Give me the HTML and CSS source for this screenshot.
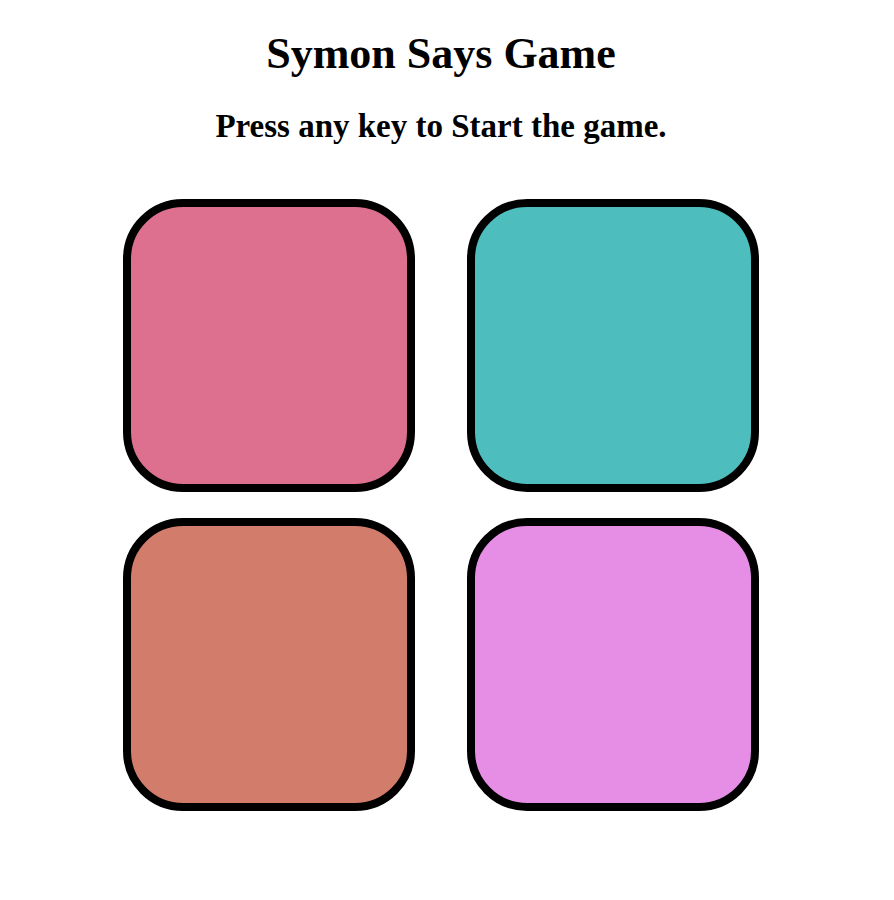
FILE: index.html
```html
<!DOCTYPE html>
<html>
<head>
<meta charset="utf-8">
<title>Symon Says Game</title>
<link rel="stylesheet" href="styles.css">
</head>
<body>
<div class="page">
  <h1 class="title">Symon Says Game</h1>
  <h2 class="subtitle">Press any key to Start the game.</h2>
  <div class="board">
    <div class="btn red"></div>
    <div class="btn teal"></div>
    <div class="btn brown"></div>
    <div class="btn pink"></div>
  </div>
</div>
</body>
</html>
```
FILE: styles.css
```css
body {
  margin: 0;
  font-family: "Liberation Serif", "Times New Roman", serif;
  background: #fff;
  color: #000;
}
.page {
  width: 882px;
  display: flex;
  flex-direction: column;
  align-items: center;
}
.title {
  font-size: 44px;
  font-weight: bold;
  margin: 29px 0 0;
  line-height: 50px;
}
.subtitle {
  font-size: 33px;
  font-weight: bold;
  margin: 28px 0 0;
  line-height: 38px;
}
.board {
  margin-top: 54px;
  display: grid;
  grid-template-columns: 292px 292px;
  column-gap: 52px;
  row-gap: 26px;
}
.btn {
  box-sizing: border-box;
  width: 292px;
  height: 293px;
  border: 8px solid #000;
  border-radius: 60px;
}
.red { background: #dc708e; }
.teal { background: #4ebdbe; }
.brown { background: #d27c6c; }
.pink { background: #e68ee6; }
```
